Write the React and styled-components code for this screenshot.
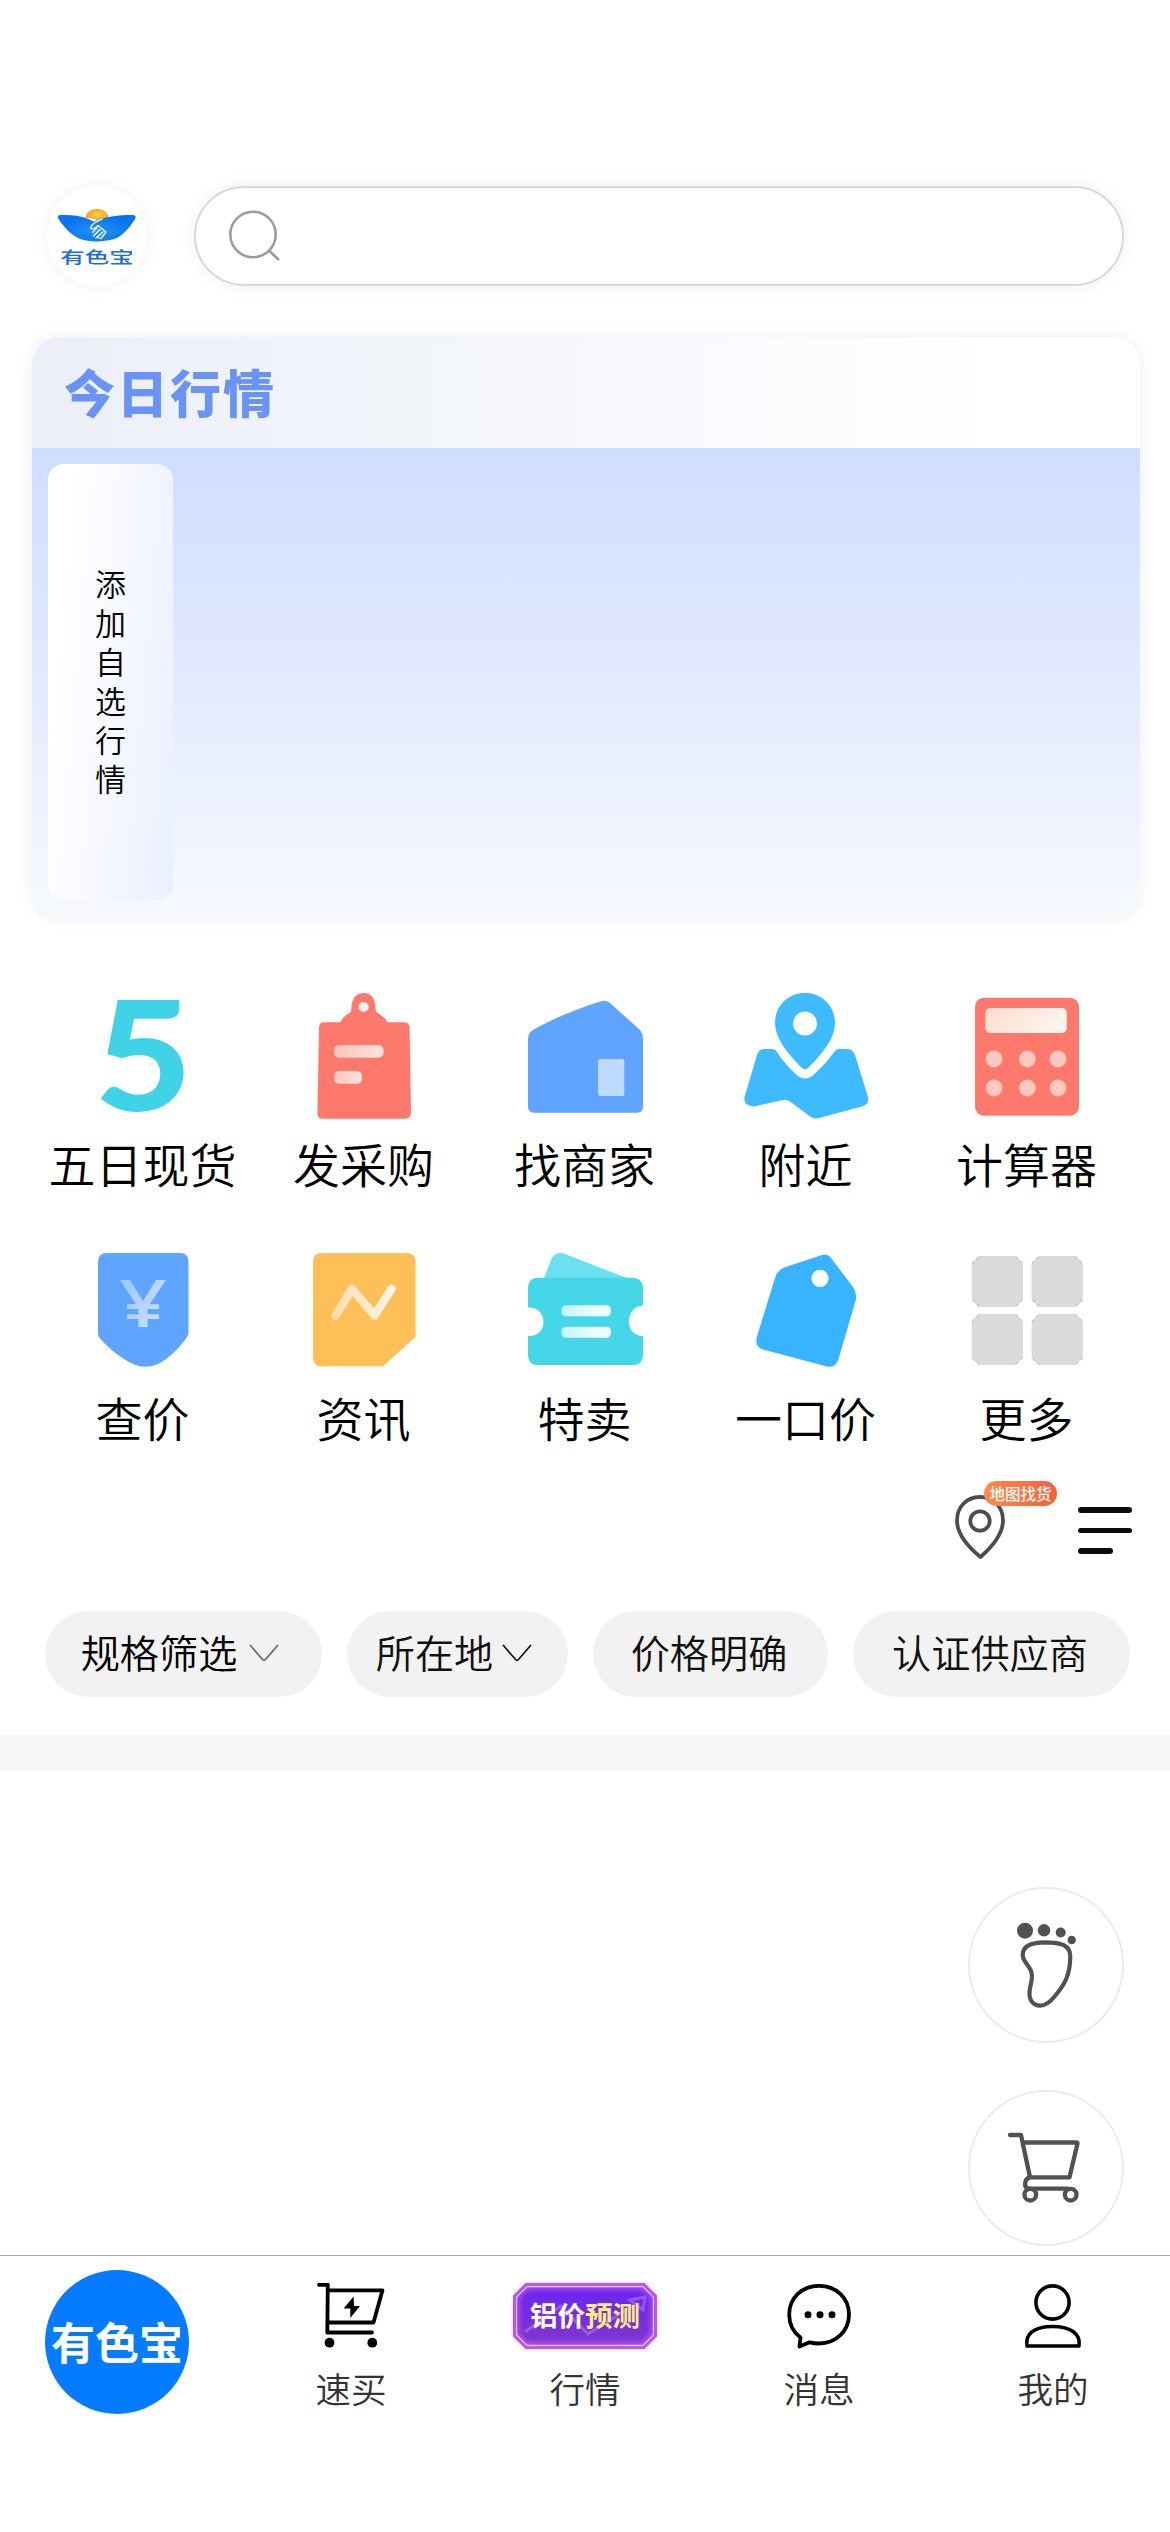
import React, { useState } from 'react';
import styled, { createGlobalStyle } from 'styled-components';

const GlobalStyle = createGlobalStyle`
  * {
    box-sizing: border-box;
  }

  body {
    margin: 0;
    background: #ffffff;
    color: #000000;
    font-family: 'Noto Sans CJK SC', sans-serif;
    font-weight: 350;
  }

  svg {
    display: block;
    flex: none;
  }

  button {
    margin: 0;
    padding: 0;
    border: none;
    background: none;
    font-family: inherit;
    font-weight: inherit;
    color: inherit;
  }
`;

const Page = styled.div`
  display: flex;
  flex-direction: column;
  width: 1170px;
  height: 2532px;
  padding-top: 186px;
  overflow: hidden;
  background: #ffffff;
`;

const Header = styled.header`
  display: flex;
  gap: 47px;
  padding: 0 46px 0 47px;
`;

const LogoCircle = styled.div`
  width: 100px;
  height: 100px;
  border-radius: 50%;
  background: #ffffff;
  box-shadow: 0 0 18px rgba(0, 0, 0, 0.06);
`;

const SearchBox = styled.div`
  flex: 1;
  display: flex;
  align-items: center;
  height: 100px;
  padding-left: 31px;
  border: 2px solid #d8d8d8;
  border-radius: 50px;
  background: #ffffff;
  box-shadow: 0 0 18px rgba(0, 0, 0, 0.06);
`;

const MarketCard = styled.section`
  margin: 51px 30px 0 32px;
  height: 581px;
  border-radius: 28px;
  overflow: hidden;
  box-shadow: 0 0 16px rgba(0, 0, 0, 0.07);
`;

const MarketHeader = styled.div`
  display: flex;
  align-items: center;
  height: 111px;
  padding: 0 0 4px 32px;
  background: linear-gradient(90deg, #eceff7 0%, #f2f5fa 35%, #fbfcfe 70%, #ffffff 88%);
`;

const MarketTitle = styled.h2`
  margin: 0;
  font-size: 51px;
  font-weight: 900;
  line-height: 60px;
  letter-spacing: 2px;
  color: #6a93f6;
`;

const MarketBody = styled.div`
  height: 470px;
  padding: 16px;
  background: linear-gradient(180deg, #cfddff 0%, #e3eafe 50%, #f6faff 100%);
`;

const AddMarket = styled.button`
  display: flex;
  align-items: center;
  justify-content: center;
  width: 125px;
  height: 436px;
  padding-bottom: 4px;
  border-radius: 16px;
  background: linear-gradient(95deg, #ffffff 15%, #ebf0ff 100%);

  span {
    width: 31px;
    font-size: 31px;
    line-height: 39px;
    word-break: break-all;
  }
`;

const Menu = styled.nav`
  display: grid;
  grid-template-columns: repeat(5, 221px);
  grid-auto-rows: 254px;
  margin: 75px 0 0 32px;
`;

const MenuItem = styled.div`
  display: flex;
  flex-direction: column;
  align-items: center;
  gap: 9px;
  font-size: 47px;
  line-height: 70px;
  white-space: nowrap;
`;

const FiveMark = styled.span`
  height: 126px;
  padding-left: 2px;
  transform: scaleX(1.11);
  font-family: Lato, sans-serif;
  font-size: 152px;
  font-weight: 900;
  line-height: 118px;
  color: #40d2e6;
`;

const Tools = styled.div`
  display: flex;
  justify-content: flex-end;
  gap: 73px;
  height: 110px;
  padding-right: 38px;
`;

const MapTool = styled.div`
  position: relative;
  width: 50px;

  svg {
    margin-top: -6px;
  }
`;

const MapBadge = styled.span`
  position: absolute;
  left: 29px;
  top: -20px;
  width: 73px;
  height: 25px;
  border-radius: 13px;
  background: linear-gradient(90deg, #ff8a4c, #f4603a);
  color: #ffffff;
  font-size: 15.5px;
  font-weight: 500;
  line-height: 24px;
  text-align: center;
`;

const MenuLines = styled.div`
  display: flex;
  flex-direction: column;
  gap: 15px;
  padding-top: 6px;
`;

const Line = styled.i`
  width: ${props => (props.$short ? 35 : 54)}px;
  height: 5.6px;
  border-radius: 3px;
  background: #0c0c0c;
`;

const Filters = styled.div`
  display: flex;
  gap: 25px;
  padding-left: 45px;
`;

const Pill = styled.button`
  display: flex;
  align-items: center;
  justify-content: center;
  gap: ${props => props.$gap || 0}px;
  width: ${props => props.$width}px;
  height: 86px;
  padding: 0 ${props => (props.$gap ? 7 : 3)}px 6px 0;
  border-radius: 43px;
  background: #f2f2f2;
  color: ${props => props.$color || '#111111'};
  font-size: 39.2px;
  line-height: 58px;
  white-space: nowrap;

  svg {
    margin-top: 4px;
  }
`;

const Divider = styled.div`
  height: 36px;
  margin-top: 38px;
  background: #f6f6f6;
`;

const ListArea = styled.main`
  display: flex;
  flex-direction: column;
  align-items: flex-end;
  gap: 47px;
  height: 484px;
  padding: 116px 46px 0 0;
`;

const FloatButton = styled.button`
  width: 156px;
  height: 156px;
  border: 2.5px solid #ebebeb;
  border-radius: 50%;
  background: #ffffff;

  svg {
    margin: -2px;
  }
`;

const TabBar = styled.footer`
  display: grid;
  grid-template-columns: repeat(5, 1fr);
  border-top: 1px solid #a8a8a8;
`;

const Tab = styled.div`
  display: flex;
  flex-direction: column;
  align-items: center;
  padding-top: ${props => (props.$home ? 14 : 24)}px;
`;

const TabIcon = styled.div`
  display: flex;
  align-items: center;
  justify-content: center;
  height: 72px;
`;

const TabLabel = styled.span`
  margin-top: 9px;
  font-size: 35.6px;
  line-height: 54px;
  color: #333333;
`;

const HomeCircle = styled.div`
  display: flex;
  align-items: center;
  justify-content: center;
  width: 144px;
  height: 144px;
  padding-bottom: 3px;
  border-radius: 50%;
  background: #057bff;
  color: #ffffff;
  font-size: 44px;
  font-weight: 700;
  line-height: 60px;
`;

const LogoMark = () => (
  <svg width="100" height="100" viewBox="0 0 100 100">
    <defs>
      <radialGradient id="wing" cx="0.5" cy="0.6" r="0.5">
        <stop offset="0" stopColor="#1f93f5" />
        <stop offset="1" stopColor="#0a74f0" />
      </radialGradient>
      <radialGradient id="sun" cx="0.55" cy="0.5" r="0.6">
        <stop offset="0" stopColor="#ffd83a" />
        <stop offset="1" stopColor="#f79420" />
      </radialGradient>
    </defs>
    <path d="M38.500 32 C39 26 44 23 50 23 C56 23 61 26 61.500 31.500 C57 32 53 33 50 34 C46 32.500 42 32 38.500 32 Z" fill="url(#sun)" />
    <path d="M11 32 C10.500 29.500 12 29 15 29 C27 29 37 30 47 35.500 C58 30.500 71 29 85 29 C88.500 29 89.500 30.500 88 33 C83 41 77 48 70 52 C58 56.500 40 56.500 31 52 C23 48 15 39 11 32 Z" fill="url(#wing)" />
    <path d="M55 33.500 C50 35 45 38 43.500 41.500 C43.500 44 48 43 51 39.500 L59 46 M50 42 L45.500 46.500 M53 43.500 L46.500 50 M56 46 L49 52 M59 46 L54 52.500 L51 51.500" fill="none" stroke="#ffffff" strokeWidth="1.300" strokeLinecap="round" strokeLinejoin="round" />
    <text transform="translate(50 76.500) scale(1 .66)" textAnchor="middle" fontSize="24.500" fontWeight="500" fill="#1a6fd8">有色宝</text>
  </svg>
);

const SearchIcon = () => (
  <svg width="54" height="54" viewBox="0 0 54 54" fill="none" stroke="#9c9c9c" strokeWidth="2.600">
    <circle cx="26" cy="25.500" r="22.700" />
    <path d="M42 41.500 L52 51" />
  </svg>
);

const FiveIcon = () => <FiveMark>5</FiveMark>;

const ClipboardIcon = () => (
  <svg width="126" height="126" viewBox="0 0 126 126">
    <defs>
      <linearGradient id="paleRed" x1="0" y1="0.500" x2="1" y2="0.500">
        <stop offset="0" stopColor="#ffc4bc" />
        <stop offset="1" stopColor="#fde2de" />
      </linearGradient>
    </defs>
    <path d="M23 29.300 H39.500 C41 25 45 22 49 19.500 C51 18 50 14 51 10 C52.500 3.500 57 0 62.700 0 C69 0 73 4 74 10 C75 14 74 17.500 76 19.500 C80 22.500 84.500 25 86.500 29.300 H103 Q108.600 29.300 108.600 35 L110 120 Q110 125.700 104 125.700 H22 Q16.300 125.700 16.400 120 L18 35 Q18 29.300 23 29.300 Z" fill="#fe786b" />
    <circle cx="62.600" cy="14" r="5" fill="#fff0ee" />
    <rect x="33" y="52" width="49.500" height="12.700" rx="5" fill="url(#paleRed)" />
    <rect x="33" y="78" width="28" height="12.700" rx="5" fill="url(#paleRed)" />
  </svg>
);

const HouseIcon = () => (
  <svg width="126" height="126" viewBox="0 0 126 126">
    <path d="M6 47 Q6 39.500 11 37 C30 26 52 17 76 9.300 Q84 5.500 89 11 L117 36 Q121 40 121 46 V114 Q121 119.700 115 119.700 H12 Q6 119.700 6 114 Z" fill="#5fa4ff" />
    <rect x="76" y="66" width="26.300" height="37" rx="2" fill="#bfdaff" />
  </svg>
);

const NearbyIcon = () => (
  <svg width="126" height="126" viewBox="0 0 126 126" fill="#3ebaff">
    <path fillRule="evenodd" d="M62 0 C79 0 92 13 92 30 C92 44 82 58 65.500 74.500 Q62 78 58.500 74.500 C43 59 32 44 32 30 C32 13 45 0 62 0 Z M62 18.500 A12 12 0 1 0 62 42.500 A12 12 0 1 0 62 18.500 Z" />
    <path d="M21 56 H29 Q32.500 56 34 59 C39 67 46 75 53 81.500 Q62 89.500 71 81.500 C79 74 86 66 92 58 Q93.500 56 96 56 H104 Q110 56 112 62 L125 104 Q126.500 111 119 113.500 L76 125 Q71 126.500 67 123.500 L47 108.500 Q44 106 40 107 L11 113.500 Q0 113 1.500 104 L14 62 Q16 56 21 56 Z" />
  </svg>
);

const CalculatorIcon = () => (
  <svg width="126" height="126" viewBox="0 0 126 126">
    <defs>
      <linearGradient id="calcScreen" x1="0" y1="0" x2="1" y2="0.300">
        <stop offset="0" stopColor="#ffdccd" />
        <stop offset="1" stopColor="#fff3ee" />
      </linearGradient>
    </defs>
    <rect x="11" y="4.700" width="104" height="118" rx="9" fill="#fe786b" />
    <rect x="21.300" y="15" width="81.500" height="25" rx="5" fill="url(#calcScreen)" />
    {[66, 95].map(y => [30, 63.4, 94].map(x => (
      <circle key={`${x}-${y}`} cx={x} cy={y} r="8.400" fill="#fdc9be" />
    )))}
  </svg>
);

const PriceIcon = () => (
  <svg width="126" height="126" viewBox="0 0 126 126">
    <defs>
      <linearGradient id="yen" x1="0" y1="0" x2="1" y2="1">
        <stop offset="0" stopColor="#8fbfff" />
        <stop offset="1" stopColor="#d9e9ff" />
      </linearGradient>
    </defs>
    <path d="M27 6 H100 Q108.500 6 108.500 15 V86 Q108.500 88 107 90 C98 103 88 112 77 117.500 Q65 122 54 117.500 C41 111 29 102 19.500 91 Q18 89 18 87 V15 Q18 6 27 6 Z" fill="#5fa4ff" />
    <text transform="translate(63 80) scale(1.26 1)" textAnchor="middle" fontFamily="'Open Sans', sans-serif" fontSize="66" fontWeight="600" fill="url(#yen)">¥</text>
  </svg>
);

const NewsIcon = () => (
  <svg width="126" height="126" viewBox="0 0 126 126">
    <defs>
      <linearGradient id="trend" gradientUnits="userSpaceOnUse" x1="34" y1="60" x2="92" y2="50">
        <stop offset="0" stopColor="#ffddae" />
        <stop offset="1" stopColor="#fff6e8" />
      </linearGradient>
    </defs>
    <path d="M21 6 H105.600 Q114.600 6 114.600 15 V89.700 L82 119.300 H21 Q12 119.300 12 110 V15 Q12 6 21 6 Z" fill="#fdc056" />
    <path d="M34.600 68.500 L51 42 L73.500 68.500 L90.500 42" fill="none" stroke="url(#trend)" strokeWidth="8.500" strokeLinecap="round" strokeLinejoin="round" />
  </svg>
);

const SaleIcon = () => (
  <svg width="126" height="126" viewBox="0 0 126 126">
    <defs>
      <linearGradient id="ticketLine" x1="0" y1="0.500" x2="1" y2="0.500">
        <stop offset="0" stopColor="#c3f5fb" />
        <stop offset="0.800" stopColor="#f2feff" />
      </linearGradient>
    </defs>
    <path d="M22 31 L29 13 Q33 3.500 43 7 L104.700 31 Z" fill="#6be1ef" />
    <path d="M16 30.700 H109 Q121 30.700 121 42 V58.500 C112 59 107 66 107 74.700 C107 83 112 88.500 121 89 V108 Q121 118 111 118 H16 Q6 118 6 108 V89 C15 89.500 21.500 84 21.500 75 C21.500 66 15 60 6 60.500 V42 Q6 30.700 16 30.700 Z" fill="#45d6e8" />
    <rect x="39.400" y="58.300" width="49.500" height="11" rx="4.500" fill="url(#ticketLine)" />
    <rect x="39.400" y="79.700" width="49.500" height="11" rx="4.500" fill="url(#ticketLine)" />
  </svg>
);

const TagIcon = () => (
  <svg width="126" height="126" viewBox="0 0 126 126">
    <path d="M41 20.500 L79 8 Q84.500 6 88 11 L110 40 Q114.500 46 112.500 54 L95.500 112 Q93 121 84 119.500 L20 102.500 Q12 100 13.500 91 L32 31 Q34 23.500 41 20.500 Z" fill="#38b3ff" />
    <circle cx="77" cy="31.300" r="8.600" fill="#ffffff" />
  </svg>
);

const MoreIcon = () => (
  <svg width="126" height="126" viewBox="0 0 126 126">
    {[[7.7, 9], [67.6, 9], [7.7, 67], [67.6, 67]].map(([x, y]) => (
      <g key={`${x}-${y}`} transform={`translate(${x} ${y})`}>
        <path d="M7 0 H44.200 L51.200 7 V44 L44.200 51 H7 L0 44 V7 Z" fill="#dbdbdb" />
        <path d="M0.500 7.500 L7.500 0.500 M43.700 0.500 L50.700 7.500 M50.700 43.500 L43.700 50.500 M7.500 50.500 L0.500 43.500" stroke="#c3c3c3" strokeWidth="1.200" strokeDasharray="3 3" />
      </g>
    ))}
  </svg>
);

const PinIcon = () => (
  <svg width="50" height="66" viewBox="0 0 50 66" fill="none" stroke="#4d4d4d" strokeWidth="3.800">
    <path d="M25 2 C38 2 48 11.500 48 25.500 C48 39 38 51 25.500 62 C12 51 2 39 2 25.500 C2 11.500 12 2 25 2 Z" strokeLinejoin="round" />
    <circle cx="25" cy="26" r="9.700" />
  </svg>
);

const Chevron = ({ color }) => (
  <svg width="30" height="18" viewBox="0 0 30 18" fill="none" stroke={color} strokeWidth="1.700">
    <path d="M1 1 L13.500 15.500 Q15 17 16.500 15.500 L29 1" />
  </svg>
);

const FootIcon = () => (
  <svg width="156" height="156" viewBox="0 0 156 156">
    <g fill="#505152">
      <circle cx="57" cy="43.700" r="8" />
      <circle cx="76" cy="43.300" r="6.200" />
      <circle cx="92.700" cy="45.500" r="5" />
      <circle cx="103.700" cy="53" r="4.200" />
    </g>
    <path d="M77 55.300 C93 55.500 102.500 58 102.300 70 C102 88 97 97 87 109 C81 116.500 76 118.700 72 118.700 C65 118.700 61 113 61.500 105 C62 97 66 91 63 84 C60 77 54.500 74 54.700 67.500 C55 58 64 55.300 77 55.300 Z" fill="none" stroke="#505152" strokeWidth="4.200" />
  </svg>
);

const CartIcon = () => (
  <svg width="156" height="156" viewBox="0 0 156 156" fill="none" stroke="#505152" strokeWidth="4.300" strokeLinecap="round" strokeLinejoin="round">
    <path d="M42 45 H53 L62 87.300 H101.500 L109.500 53.500 Q109.500 52.500 108 52.500 H55.500" />
    <path d="M61 87.500 C56 90 55.500 98.500 61 98.700 H100" />
    <circle cx="62.300" cy="104.700" r="5.800" />
    <circle cx="102.700" cy="104.700" r="5.800" />
  </svg>
);

const QuickBuyIcon = () => (
  <svg width="68" height="66" viewBox="0 0 68 66">
    <path d="M2 1.800 H10.800 L10.300 49.500 H55 M11 7.300 H65.500 L56.500 39.500 H11" fill="none" stroke="#000000" strokeWidth="3.800" strokeLinecap="round" strokeLinejoin="round" />
    <path d="M36.600 13.500 L26.600 25.500 H33.300 V35 L43 23 H37 Z" />
    <circle cx="12.500" cy="59.700" r="4.900" />
    <circle cx="55.300" cy="59.700" r="4.900" />
  </svg>
);

const ForecastBadge = () => (
  <svg width="152" height="72" viewBox="0 0 152 72">
    <defs>
      <linearGradient id="forecast" x1="0" y1="0" x2="0" y2="1">
        <stop offset="0" stopColor="#6a24f2" />
        <stop offset="1" stopColor="#8236cc" />
      </linearGradient>
      <filter id="glow" x="-10%" y="-20%" width="120%" height="140%">
        <feGaussianBlur stdDeviation="2.500" />
      </filter>
    </defs>
    <path d="M17 4 H135 L147 16 V56 L135 68 H17 L5 56 V16 Z" fill="url(#forecast)" stroke="#a566d8" strokeWidth="2" />
    <path d="M18 7 H134 L144 17 V55 L134 65 H18 L8 55 V17 Z" fill="none" stroke="#c65cf5" strokeWidth="5" opacity="0.800" filter="url(#glow)" />
    <path d="M18 6.500 H134 L144.500 17 V55 L134 65.500 H18 L7.500 55 V17 Z" fill="none" stroke="#f0bdfa" strokeWidth="1.300" />
    <path d="M16 52 L52 26 L79 54 L128 23 M121 20 L136 17 L134 30 Z" fill="none" stroke="#a678ea" strokeWidth="3" opacity="0.600" />
    <text x="76" y="46" textAnchor="middle" fontSize="27.500" fontWeight="700" fill="#ffffff">
      铝价<tspan fill="#ffec80">预测</tspan>
    </text>
  </svg>
);

const MessageIcon = () => (
  <svg width="66" height="66" viewBox="0 0 66 66">
    <path d="M14.500 54.500 C7 49 3.200 40 3.200 31.500 C3.200 15 16 2.800 33 2.800 C50 2.800 63 15 63 31.500 C63 48 50 60.500 33 60.500 C30 60.500 26.500 60 23.500 59.300 L13.500 63.500 Z" fill="none" stroke="#000000" strokeWidth="3.800" strokeLinejoin="round" />
    <circle cx="22" cy="31.700" r="3.500" />
    <circle cx="34" cy="31.700" r="3.500" />
    <circle cx="46" cy="31.700" r="3.500" />
  </svg>
);

const MineIcon = () => (
  <svg width="66" height="66" viewBox="0 0 66 66" fill="none" stroke="#000000" strokeWidth="3.600" strokeLinejoin="round">
    <circle cx="32.500" cy="19.500" r="16.600" />
    <path d="M7 63 C5 51 14 43.500 32.500 43.500 C51 43.500 61 51 59 63 Z" />
  </svg>
);

const menuItems = [
  { label: '五日现货', icon: FiveIcon },
  { label: '发采购', icon: ClipboardIcon },
  { label: '找商家', icon: HouseIcon },
  { label: '附近', icon: NearbyIcon },
  { label: '计算器', icon: CalculatorIcon },
  { label: '查价', icon: PriceIcon },
  { label: '资讯', icon: NewsIcon },
  { label: '特卖', icon: SaleIcon },
  { label: '一口价', icon: TagIcon },
  { label: '更多', icon: MoreIcon },
];

const filters = [
  { label: '规格筛选', width: 277, gap: 12, arrow: '#666666', color: '#000000' },
  { label: '所在地', width: 221, gap: 9, arrow: '#111111' },
  { label: '价格明确', width: 235 },
  { label: '认证供应商', width: 277 },
];

const tabs = [
  { label: '速买', icon: QuickBuyIcon },
  { label: '行情', icon: ForecastBadge },
  { label: '消息', icon: MessageIcon },
  { label: '我的', icon: MineIcon },
];

const App = () => {
  const [activeFilter, setActiveFilter] = useState(null);

  return (
    <>
      <GlobalStyle />
      <Page>
        <Header>
          <LogoCircle>
            <LogoMark />
          </LogoCircle>
          <SearchBox>
            <SearchIcon />
          </SearchBox>
        </Header>

        <MarketCard>
          <MarketHeader>
            <MarketTitle>今日行情</MarketTitle>
          </MarketHeader>
          <MarketBody>
            <AddMarket>
              <span>添加自选行情</span>
            </AddMarket>
          </MarketBody>
        </MarketCard>

        <Menu>
          {menuItems.map(({ label, icon: Icon }) => (
            <MenuItem key={label}>
              <Icon />
              {label}
            </MenuItem>
          ))}
        </Menu>

        <Tools>
          <MapTool>
            <PinIcon />
            <MapBadge>地图找货</MapBadge>
          </MapTool>
          <MenuLines>
            <Line />
            <Line />
            <Line $short />
          </MenuLines>
        </Tools>

        <Filters>
          {filters.map(({ label, width, gap, arrow, color }) => (
            <Pill
              key={label}
              $width={width}
              $gap={gap}
              $color={color}
              aria-pressed={activeFilter === label}
              onClick={() => setActiveFilter(label)}
            >
              {label}
              {arrow && <Chevron color={arrow} />}
            </Pill>
          ))}
        </Filters>

        <Divider />

        <ListArea>
          <FloatButton>
            <FootIcon />
          </FloatButton>
          <FloatButton>
            <CartIcon />
          </FloatButton>
        </ListArea>

        <TabBar>
          <Tab $home>
            <HomeCircle>有色宝</HomeCircle>
          </Tab>
          {tabs.map(({ label, icon: Icon }) => (
            <Tab key={label}>
              <TabIcon>
                <Icon />
              </TabIcon>
              <TabLabel>{label}</TabLabel>
            </Tab>
          ))}
        </TabBar>
      </Page>
    </>
  );
};

export default App;
